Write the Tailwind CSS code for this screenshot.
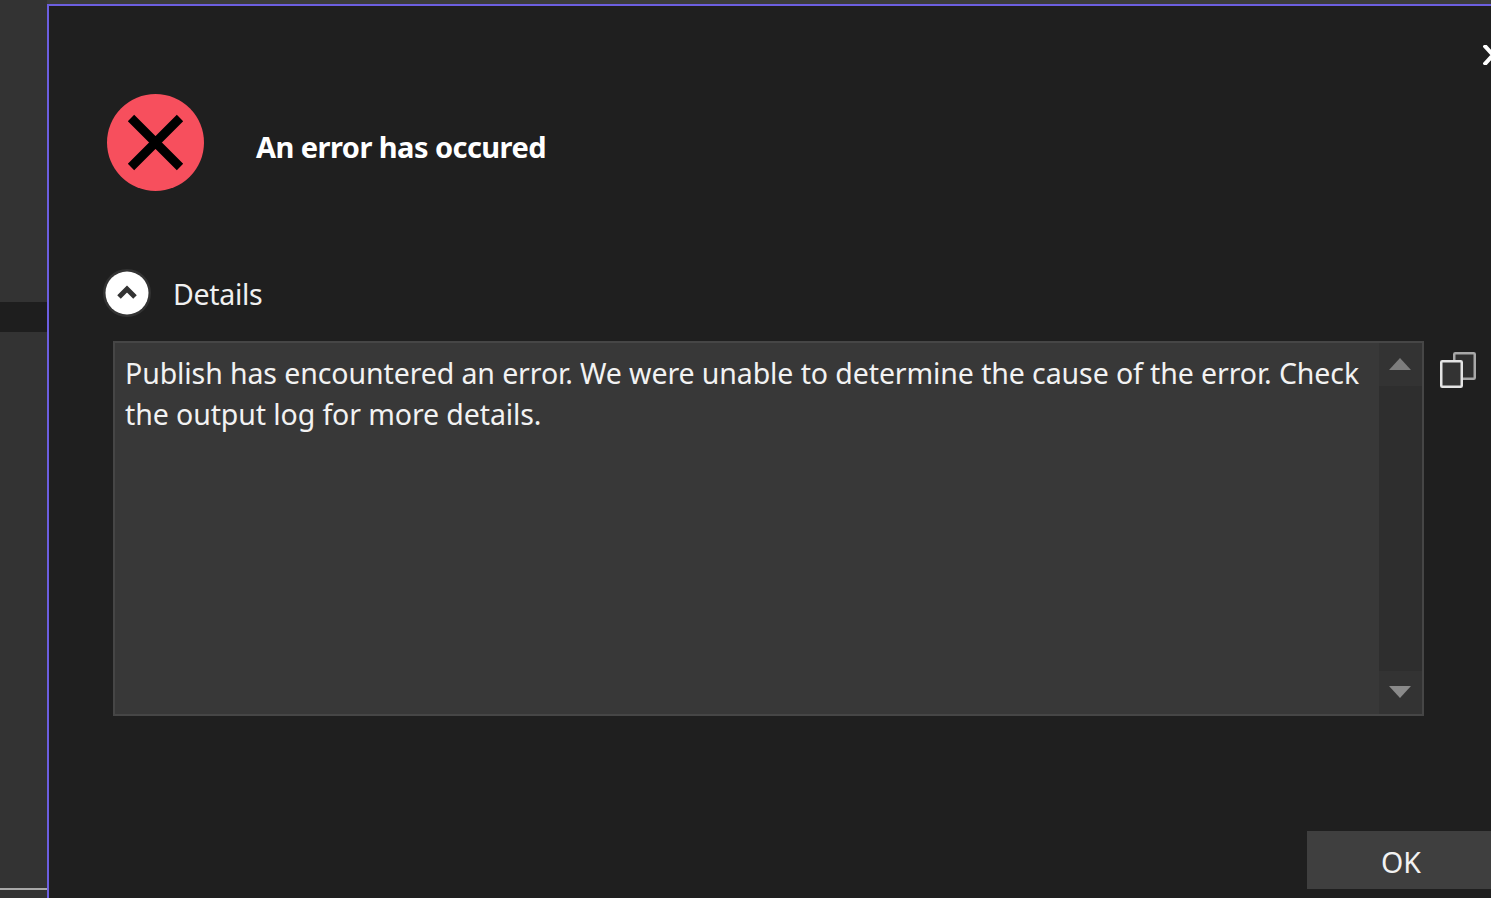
<!DOCTYPE html>
<html><head><meta charset="utf-8"><script src="https://cdn.jsdelivr.net/npm/@tailwindcss/browser@4"></script></head>
<body class="m-0 overflow-hidden">
<div class="flex w-[1491px] h-[898px] bg-[#333333] overflow-hidden font-['Noto_Sans',sans-serif] text-white">
  <div class="flex flex-col w-[47px] shrink-0">
    <div class="h-[302px] bg-[#333333]"></div>
    <div class="h-[30px] bg-[#1e1e1e]"></div>
    <div class="h-[556px] bg-[#333333]"></div>
    <div class="h-[2px] bg-[#a8a8a8]"></div>
    <div class="flex-1 bg-[#333333]"></div>
  </div>
  <div class="flex-1 flex flex-col min-w-0">
    <div class="h-[4px] bg-[#3c3c3c] shrink-0"></div>
    <div class="relative flex-1 border-l-2 border-t-2 border-[#6c5fe0] bg-[#1f1f1f] pl-[58px]">
      <div class="absolute right-[-12px] top-[39px]">
        <svg width="20" height="20" viewBox="0 0 20 20"><path d="M1 0 L19 20 M19 0 L1 20" stroke="#fff" stroke-width="4" fill="none"/></svg>
      </div>
      <div class="flex items-center h-[97px] mt-[88px]">
        <svg class="shrink-0" width="97" height="97" viewBox="0 0 97 97"><circle cx="48.5" cy="48.5" r="48.5" fill="#f74f5d"/><path d="M24 24 L73 73 M73 24 L24 73" stroke="#000" stroke-width="9" fill="none"/></svg>
        <div class="ml-[52px] mt-[8px] text-[29px] leading-[40px] font-bold tracking-[-0.55px]">An error has occured</div>
      </div>
      <div class="flex items-center h-[48px] mt-[78px] -ml-[4px]">
        <svg class="shrink-0" width="48" height="48" viewBox="0 0 48 48"><circle cx="24" cy="24" r="24" fill="#333333"/><circle cx="24" cy="24" r="21.5" fill="#fff"/><path d="M16 28 L24 20 L32 28" stroke="#333" stroke-width="5" fill="none"/></svg>
        <div class="ml-[22px] mt-[2px] text-[28.5px] leading-[40px] tracking-[-0.3px] text-[#f0f0f0]">Details</div>
      </div>
      <div class="flex items-start mt-[24px] ml-[6px]">
        <div class="flex w-[1311px] h-[375px] border-2 border-[#464646] bg-[#383838]">
          <div class="flex-1 pl-[10px] pt-[10px] pr-[10px] text-[28.5px] leading-[41px] text-[#f2f2f2] tracking-[-0.1px]">Publish has encountered an error. We were unable to determine the cause of the error. Check the output log for more details.</div>
          <div class="flex flex-col w-[43px] shrink-0 bg-[#2e2e2e]">
            <div class="h-[43px] bg-[#333333] flex items-center justify-center">
              <svg width="22" height="12" viewBox="0 0 22 12" class="-mt-[1px] -ml-[2px]"><path d="M11 0 L22 12 L0 12 Z" fill="#7d7d7d"/></svg>
            </div>
            <div class="flex-1"></div>
            <div class="h-[43px] bg-[#333333] flex items-center justify-center">
              <svg width="22" height="12" viewBox="0 0 22 12" class="-mt-[2px] -ml-[2px]"><path d="M0 0 L22 0 L11 12 Z" fill="#8a8a8a"/></svg>
            </div>
          </div>
        </div>
        <svg class="shrink-0 ml-[16px] mt-[11px]" width="36" height="36" viewBox="0 0 36 36">
          <rect x="14.25" y="1.25" width="20.5" height="25.5" rx="1" fill="#2f2f2f" stroke="#a8a8a8" stroke-width="2.5"/>
          <rect x="1.25" y="9.25" width="20.5" height="25.5" rx="1" fill="#333" stroke="#e4e4e4" stroke-width="2.5"/>
        </svg>
      </div>
      <div class="absolute right-0 top-[825px] w-[184px] h-[58px] bg-[#3f3f3f] flex items-center justify-center pl-[4px] pt-[4px] text-[28.5px] text-[#f2f2f2]">OK</div>
    </div>
  </div>
</div>
</body></html>
